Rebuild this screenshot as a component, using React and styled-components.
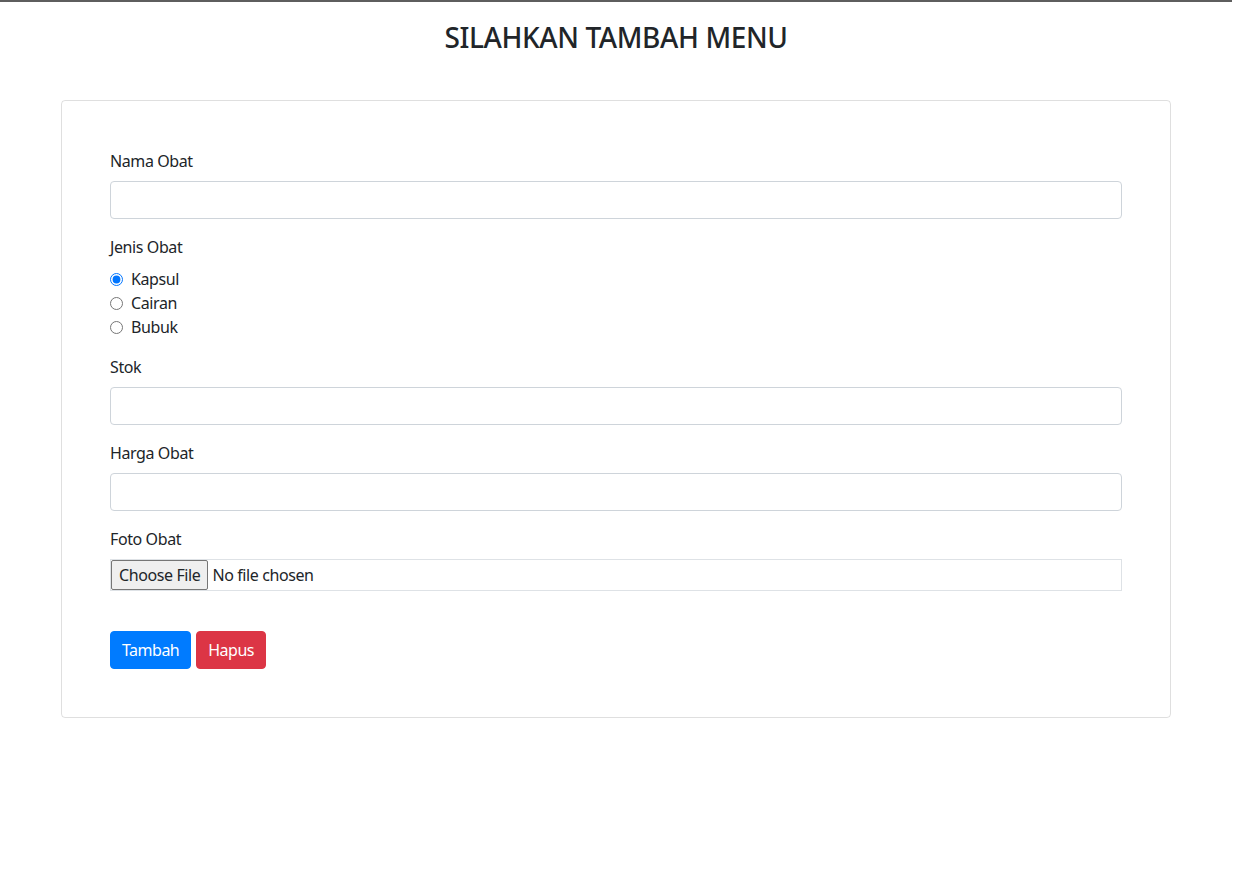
import React from "react";
import styled, { createGlobalStyle } from "styled-components";

const GlobalStyle = createGlobalStyle`
  html, body {
    margin: 0;
    background: #fff;
  }
  body {
    font-family: "Noto Sans", "Open Sans", "Liberation Sans", sans-serif;
    font-size: 16px;
    line-height: 24px;
    letter-spacing: -0.4px;
    color: #212529;
  }
  * {
    box-sizing: border-box;
  }
`;

const Page = styled.div`
  padding-right: 3px;
`;

const TopLine = styled.div`
  height: 2px;
  background: #5e5e5e;
`;

const Title = styled.h2`
  margin: 0;
  padding-top: 17px;
  height: 98px;
  text-align: center;
  font-size: 28px;
  font-weight: 550;
  line-height: 36px;
  letter-spacing: -0.4px;
  color: #212529;
`;

const Card = styled.div`
  width: 1110px;
  margin: 0 auto;
  border: 1px solid rgba(0, 0, 0, 0.125);
  border-radius: 4px;
  padding: 48px;
`;

const FormGroup = styled.div`
  margin-bottom: 16px;
`;

const Label = styled.label`
  display: block;
  margin-bottom: 8px;
`;

const Input = styled.input`
  display: block;
  width: 100%;
  height: 38px;
  padding: 6px 12px;
  font: inherit;
  border: 1px solid #ced4da;
  border-radius: 4px;
  background: #fff;
`;

const RadioRow = styled.label`
  display: flex;
  align-items: center;
  height: 24px;

  input {
    margin: 0 8px 0 0;
    width: 13px;
    height: 13px;
    accent-color: #0075ff;
  }
`;

const FileInput = styled.input`
  display: block;
  width: 100%;
  height: 32px;
  font: inherit;
  letter-spacing: -0.4px;
  border: 1px solid #dee2e6;
  padding: 0;
  color: #212529;

  &::file-selector-button {
    font: inherit;
    letter-spacing: -0.4px;
    height: 30px;
    margin: 0 4px 0 0;
    padding: 0 7px;
    background: #efefef;
    border: 1px solid #767676;
    border-radius: 2px;
    color: #212529;
  }
`;

const Actions = styled.div`
  display: flex;
  gap: 5px;
  margin-top: 40px;
`;

const Button = styled.button`
  height: 38px;
  padding: 0 11px;
  font: inherit;
  letter-spacing: -0.5px;
  color: #fff;
  border: 1px solid ${(p) => (p.$danger ? "#dc3545" : "#007bff")};
  background: ${(p) => (p.$danger ? "#dc3545" : "#007bff")};
  border-radius: 4px;
`;

const App = () => {
  return (
    <Page>
      <GlobalStyle />
      <TopLine />
      <Title>SILAHKAN TAMBAH MENU</Title>
      <Card>
        <FormGroup>
          <Label>Nama Obat</Label>
          <Input type="text" />
        </FormGroup>
        <FormGroup>
          <Label>Jenis Obat</Label>
          <RadioRow>
            <input type="radio" name="jenis" defaultChecked /> Kapsul
          </RadioRow>
          <RadioRow>
            <input type="radio" name="jenis" /> Cairan
          </RadioRow>
          <RadioRow>
            <input type="radio" name="jenis" /> Bubuk
          </RadioRow>
        </FormGroup>
        <FormGroup>
          <Label>Stok</Label>
          <Input type="text" />
        </FormGroup>
        <FormGroup>
          <Label>Harga Obat</Label>
          <Input type="text" />
        </FormGroup>
        <Label>Foto Obat</Label>
        <FileInput type="file" />
        <Actions>
          <Button>Tambah</Button>
          <Button $danger>Hapus</Button>
        </Actions>
      </Card>
    </Page>
  );
};

export default App;
